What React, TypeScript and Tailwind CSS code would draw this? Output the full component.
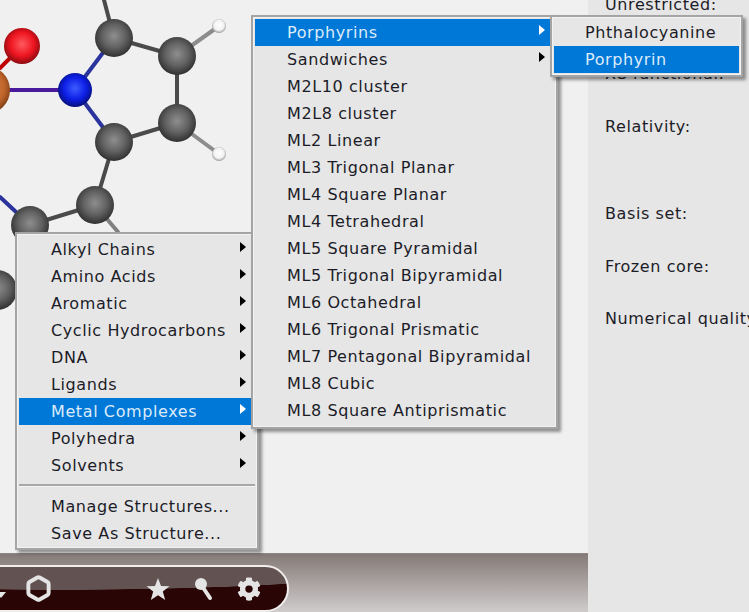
import { FaCog } from "react-icons/fa";
import { Hexagon } from "lucide-react";

type Row = { label: string; sub?: boolean; active?: boolean };

const fontClass = "font-['DejaVu_Sans',sans-serif] text-[16px] tracking-[0.6px] text-[#1c1c28]";

const firstMenu: Row[] = [
  { label: "Alkyl Chains", sub: true },
  { label: "Amino Acids", sub: true },
  { label: "Aromatic", sub: true },
  { label: "Cyclic Hydrocarbons", sub: true },
  { label: "DNA", sub: true },
  { label: "Ligands", sub: true },
  { label: "Metal Complexes", sub: true, active: true },
  { label: "Polyhedra", sub: true },
  { label: "Solvents", sub: true },
];

const secondMenu: Row[] = [
  { label: "Porphyrins", sub: true, active: true },
  { label: "Sandwiches", sub: true },
  { label: "M2L10 cluster" },
  { label: "M2L8 cluster" },
  { label: "ML2 Linear" },
  { label: "ML3 Trigonal Planar" },
  { label: "ML4 Square Planar" },
  { label: "ML4 Tetrahedral" },
  { label: "ML5 Square Pyramidal" },
  { label: "ML5 Trigonal Bipyramidal" },
  { label: "ML6 Octahedral" },
  { label: "ML6 Trigonal Prismatic" },
  { label: "ML7 Pentagonal Bipyramidal" },
  { label: "ML8 Cubic" },
  { label: "ML8 Square Antiprismatic" },
];

function MenuRow({ row, textInset }: { row: Row; textInset: string }) {
  return (
    <div
      className={`flex h-[27px] items-center ${textInset} ${
        row.active ? "bg-[#0078d7] text-[#dcebfa]" : ""
      }`}
    >
      <span className="flex-1 whitespace-nowrap">{row.label}</span>
      {row.sub && (
        <span
          className={`mb-[5px] mr-[9px] h-0 w-0 border-y-[5px] border-l-[6px] border-y-transparent ${
            row.active ? "border-l-white" : "border-l-black"
          }`}
        />
      )}
    </div>
  );
}

const menuBox =
  "absolute z-10 border-2 border-[#a4a4a4] bg-[#e6e6e6] p-[2px] shadow-[3px_3px_3px_rgba(0,0,0,0.4)] inset-shadow-[0_0_0_1px_#f2f2f2]";

function Atom({ x, y, r, fill }: { x: number; y: number; r: number; fill: string }) {
  return <circle cx={x} cy={y} r={r} fill={`url(#${fill})`} />;
}

function Molecule() {
  return (
    <svg className="absolute left-0 top-0" width="588" height="553" viewBox="0 0 588 553">
      <defs>
        <radialGradient id="carbon" cx="0.5" cy="0.45" r="0.55">
          <stop offset="0" stopColor="#8e8e8e" />
          <stop offset="0.55" stopColor="#626262" />
          <stop offset="1" stopColor="#303030" />
        </radialGradient>
        <radialGradient id="nitrogen" cx="0.5" cy="0.45" r="0.55">
          <stop offset="0" stopColor="#3d5cff" />
          <stop offset="0.6" stopColor="#0d1fe6" />
          <stop offset="1" stopColor="#06107a" />
        </radialGradient>
        <radialGradient id="oxygen" cx="0.5" cy="0.45" r="0.55">
          <stop offset="0" stopColor="#ff5a60" />
          <stop offset="0.6" stopColor="#ee1520" />
          <stop offset="1" stopColor="#8a0a10" />
        </radialGradient>
        <radialGradient id="metal" cx="0.5" cy="0.45" r="0.55">
          <stop offset="0" stopColor="#d98a50" />
          <stop offset="0.7" stopColor="#c0642a" />
          <stop offset="1" stopColor="#7c3d14" />
        </radialGradient>
        <radialGradient id="hydrogen" cx="0.5" cy="0.45" r="0.55">
          <stop offset="0" stopColor="#ffffff" />
          <stop offset="0.65" stopColor="#f2f2f2" />
          <stop offset="1" stopColor="#9a9a9a" />
        </radialGradient>
      </defs>
      <g strokeWidth="4" strokeLinecap="round">
        <line x1="104" y1="0" x2="114" y2="38" stroke="#4a4a4a" />
        <line x1="114" y1="38" x2="177" y2="56" stroke="#4a4a4a" />
        <line x1="177" y1="56" x2="177" y2="123" stroke="#4a4a4a" />
        <line x1="177" y1="123" x2="114" y2="142" stroke="#4a4a4a" />
        <line x1="114" y1="142" x2="95" y2="205" stroke="#4a4a4a" />
        <line x1="95" y1="205" x2="30" y2="225" stroke="#4a4a4a" />
        <line x1="95" y1="205" x2="118" y2="232" stroke="#808080" />
        <line x1="177" y1="56" x2="219" y2="26" stroke="#8c8c8c" />
        <line x1="177" y1="123" x2="219" y2="154" stroke="#8c8c8c" />
        <line x1="75" y1="90" x2="114" y2="38" stroke="#2a349c" />
        <line x1="75" y1="90" x2="114" y2="142" stroke="#2a349c" />
        <line x1="0" y1="197" x2="30" y2="225" stroke="#2a349c" />
        <line x1="0" y1="90" x2="75" y2="90" stroke="#4a1a9c" />
        <line x1="0" y1="68" x2="22" y2="46" stroke="#c00000" />
      </g>
      <Atom x={-14} y={90} r={24} fill="metal" />
      <Atom x={22} y={46} r={18} fill="oxygen" />
      <Atom x={75} y={90} r={17} fill="nitrogen" />
      <Atom x={114} y={38} r={19} fill="carbon" />
      <Atom x={177} y={56} r={19} fill="carbon" />
      <Atom x={177} y={123} r={19} fill="carbon" />
      <Atom x={114} y={142} r={19} fill="carbon" />
      <Atom x={95} y={205} r={19} fill="carbon" />
      <Atom x={30} y={225} r={19} fill="carbon" />
      <Atom x={219} y={26} r={7} fill="hydrogen" />
      <Atom x={219} y={154} r={7} fill="hydrogen" />
      <Atom x={-3} y={290} r={20} fill="carbon" />
    </svg>
  );
}

function Toolbar() {
  return (
    <div className="h-[59px] shrink-0 overflow-hidden border-t border-[#8f8583] bg-[linear-gradient(#857a77,#cfcccc)] pt-[11px]">
      <div className="relative -ml-[40px] flex h-[47px] w-[329px] items-center rounded-[24px] border-2 border-[#f2eeee] bg-[radial-gradient(ellipse_340px_23px_at_30%_0%,#625252_98%,#2a0505_100%)]">
        <span className="ml-[34px] mt-[12px] h-0 w-0 border-x-[5px] border-t-[6px] border-x-transparent border-t-[#e6e6e6]" />
        <Hexagon className="ml-[19px] h-[27px] w-[27px] text-[#e4e4e4]" strokeWidth={3.5} />
        <svg className="ml-[94px]" width="24" height="24" viewBox="0 0 24 24">
          <polygon
            points="12,1 15,9 23.5,9.3 16.8,14.6 19.2,23 12,18.2 4.8,23 7.2,14.6 0.5,9.3 9,9"
            fill="#e4e4e4"
          />
        </svg>
        <svg className="ml-[24px]" width="24" height="26" viewBox="0 0 24 26">
          <line x1="8" y1="10" x2="16" y2="22" stroke="#e4e4e4" strokeWidth="4" strokeLinecap="round" />
          <circle cx="7" cy="8" r="6" fill="#e4e4e4" />
        </svg>
        <FaCog className="ml-[19px] h-[24px] w-[24px] text-[#e4e4e4]" />
      </div>
    </div>
  );
}

function SidePanel() {
  return (
    <div className={`w-[161px] shrink-0 overflow-hidden bg-[#e6e6e6] pl-[17px] ${fontClass}`}>
      <div className="-mt-[5px] h-[20px] whitespace-nowrap leading-[20px]">Unrestricted:</div>
      <div className="mt-[49px] h-[20px] whitespace-nowrap leading-[20px]">XC functional:</div>
      <div className="mt-[33px] h-[20px] whitespace-nowrap leading-[20px]">Relativity:</div>
      <div className="mt-[67px] h-[20px] whitespace-nowrap leading-[20px]">Basis set:</div>
      <div className="mt-[33px] h-[20px] whitespace-nowrap leading-[20px]">Frozen core:</div>
      <div className="mt-[32px] h-[20px] whitespace-nowrap leading-[20px]">Numerical quality:</div>
    </div>
  );
}

export default function App() {
  return (
    <div className={`relative flex h-[612px] w-[749px] overflow-hidden ${fontClass}`}>
      <div className="flex w-[588px] shrink-0 flex-col bg-[#f0f0f0]">
        <div className="relative flex-1">
          <Molecule />
        </div>
        <Toolbar />
      </div>
      <SidePanel />

      <div className={`${menuBox} left-[15px] top-[232px] h-[318px] w-[244px]`}>
        {firstMenu.map((row) => (
          <MenuRow key={row.label} row={row} textInset="pl-[32px]" />
        ))}
        <div className="my-[5px] h-[2px] bg-[#a8a8a8] shadow-[0_1px_0_#f4f4f4]" />
        <div className="pt-[2px]">
          <MenuRow row={{ label: "Manage Structures..." }} textInset="pl-[32px]" />
          <MenuRow row={{ label: "Save As Structure..." }} textInset="pl-[32px]" />
        </div>
      </div>

      <div className={`${menuBox} left-[251px] top-[15px] h-[414px] w-[307px]`}>
        {secondMenu.map((row) => (
          <MenuRow key={row.label} row={row} textInset="pl-[32px]" />
        ))}
      </div>

      <div className={`${menuBox} left-[550px] top-[15px] h-[62px] w-[193px]`}>
        <MenuRow row={{ label: "Phthalocyanine" }} textInset="pl-[31px]" />
        <MenuRow row={{ label: "Porphyrin", active: true }} textInset="pl-[31px]" />
      </div>
    </div>
  );
}
